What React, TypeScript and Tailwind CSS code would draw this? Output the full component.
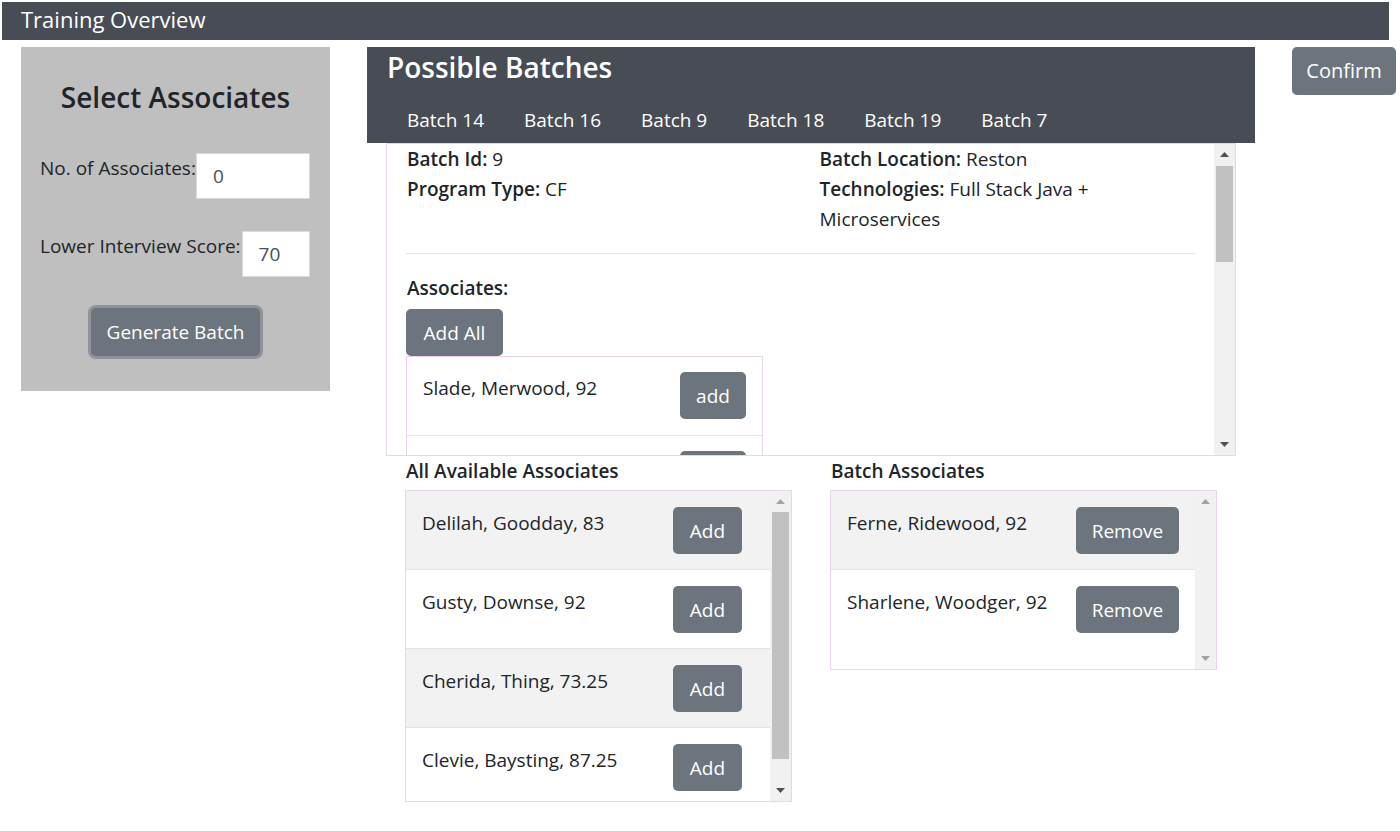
import React from 'react';

type Associate = { name: string };

const available: Associate[] = [
  { name: 'Delilah, Goodday, 83' },
  { name: 'Gusty, Downse, 92' },
  { name: 'Cherida, Thing, 73.25' },
  { name: 'Clevie, Baysting, 87.25' },
];

const batchAssociates: Associate[] = [
  { name: 'Ferne, Ridewood, 92' },
  { name: 'Sharlene, Woodger, 92' },
];

const tabs = ['Batch 14', 'Batch 16', 'Batch 9', 'Batch 18', 'Batch 19', 'Batch 7'];

const Arrow = ({ up, light }: { up?: boolean; light?: boolean }) => (
  <div className="h-[21px] w-full flex items-center justify-center">
    <svg width="9" height="5" viewBox="0 0 9 5">
      <polygon
        points={up ? '0,5 9,5 4.5,0' : '0,0 9,0 4.5,5'}
        fill={light ? '#a3a3a3' : '#505050'}
      />
    </svg>
  </div>
);

const ScrollBar = ({
  thumbTop,
  thumbHeight,
  upLight,
  downLight,
}: {
  thumbTop?: number;
  thumbHeight?: number;
  upLight?: boolean;
  downLight?: boolean;
}) => (
  <div className="w-[21px] shrink-0 h-full bg-[#f1f1f1] flex flex-col">
    <Arrow up light={upLight} />
    <div className="flex-1 px-[2px]">
      {thumbHeight !== undefined && (
        <div
          className="w-full bg-[#c1c1c1]"
          style={{ marginTop: thumbTop, height: thumbHeight }}
        />
      )}
    </div>
    <Arrow light={downLight} />
  </div>
);

const GrayButton = ({ label, className = '' }: { label: string; className?: string }) => (
  <button
    className={`bg-[#6c757d] text-white text-[19px] leading-[30px] rounded-[5px] h-[47px] ${className}`}
  >
    {label}
  </button>
);

const ListRow = ({
  name,
  action,
  shaded,
  last,
  padRight,
  buttonClass,
}: {
  name: string;
  action: string;
  shaded: boolean;
  last: boolean;
  padRight: string;
  buttonClass: string;
}) => (
  <div
    className={`h-[79px] shrink-0 flex items-start justify-between pl-[16px] pt-[16px] ${padRight} ${
      shaded ? 'bg-[#f2f2f2]' : 'bg-white'
    } ${last ? '' : 'border-b border-[#e3e3e3]'}`}
  >
    <span className="text-[19px] leading-[30px] text-[#212529] mt-[1px]">{name}</span>
    <GrayButton label={action} className={buttonClass} />
  </div>
);

const AssociateList = ({
  title,
  items,
  action,
  heightClass,
  padRight,
  buttonClass,
  bar,
}: {
  title: string;
  items: Associate[];
  action: string;
  heightClass: string;
  padRight: string;
  buttonClass: string;
  bar: React.ReactNode;
}) => (
  <div className="w-[387px] flex flex-col">
    <div className="text-[19px] leading-[30px] font-semibold text-[#212529] pl-[1px] mb-[4px]">
      {title}
    </div>
    <div className={`border border-[#ebd3ee] flex ${heightClass}`}>
      <div className="flex-1 flex flex-col overflow-hidden">
        {items.map((a, i) => (
          <ListRow
            key={a.name}
            name={a.name}
            action={action}
            shaded={i % 2 === 0}
            last={i === items.length - 1}
            padRight={padRight}
            buttonClass={buttonClass}
          />
        ))}
      </div>
      {bar}
    </div>
  </div>
);

const SelectPanel = () => (
  <div className="w-[309px] h-[344px] shrink-0 bg-[#bfbfbf] flex flex-col pl-[19px] pr-[20px]">
    <h4 className="mt-[32px] h-[36px] text-[28px] leading-[36px] font-semibold text-[#212529] text-center pl-[1px]">
      Select Associates
    </h4>
    <div className="mt-[38px] flex items-start">
      <label className="text-[19px] leading-[30px] text-[#212529] whitespace-nowrap">
        No. of Associates:
      </label>
      <div className="flex-1 h-[46px] bg-white border border-[#dadada] pl-[16px] text-[19px] leading-[44px] text-[#495057]">
        0
      </div>
    </div>
    <div className="mt-[32px] flex items-start">
      <label className="text-[19px] leading-[30px] text-[#212529] whitespace-nowrap pr-[1px]">
        Lower Interview Score:
      </label>
      <div className="flex-1 h-[46px] bg-white border border-[#dadada] pl-[16px] text-[19px] leading-[44px] text-[#495057]">
        70
      </div>
    </div>
    <div className="mt-[31px] flex justify-center pl-[1px]">
      <button className="h-[48px] px-[16px] bg-[#6c757d] text-white text-[19px] leading-[30px] rounded-[5px] ring-[3px] ring-[#8e9398]">
        Generate Batch
      </button>
    </div>
  </div>
);

const BatchDetails = () => (
  <div className="mx-[19px] h-[313px] border border-[#ebd3ee] flex">
    <div className="flex-1 overflow-hidden pl-[19px] pr-[19px] text-[19px] leading-[30px] text-[#212529]">
      <div className="grid grid-cols-2">
        <div className="pl-[1px]">
          <div>
            <b className="font-semibold">Batch Id:</b> 9
          </div>
          <div>
            <b className="font-semibold">Program Type:</b> CF
          </div>
        </div>
        <div className="pl-[19px]">
          <div>
            <b className="font-semibold">Batch Location:</b> Reston
          </div>
          <p>
            <b className="font-semibold">Technologies:</b> Full Stack Java + Microservices
          </p>
        </div>
      </div>
      <hr className="mt-[19px] border-t border-[#e4e4e4]" />
      <div className="mt-[19px] font-semibold pl-[1px]">Associates:</div>
      <GrayButton label="Add All" className="mt-[6px] w-[97px]" />
      <div className="w-[357px] border border-[#ebd3ee] border-b-0">
        <div className="h-[79px] border-b border-[#e3e3e3] flex items-start justify-between pl-[16px] pr-[16px] pt-[15px]">
          <span className="mt-[1px]">Slade, Merwood, 92</span>
          <GrayButton label="add" className="w-[66px]" />
        </div>
        <div className="h-[79px] flex items-start justify-end pr-[16px] pt-[15px]">
          <GrayButton label="add" className="w-[66px]" />
        </div>
      </div>
    </div>
    <ScrollBar thumbTop={1} thumbHeight={96} />
  </div>
);

export default function App() {
  return (
    <div
      className="w-full h-[832px] bg-white border-b border-[#d4d4d4] overflow-hidden"
      style={{ fontFamily: '"Open Sans", "Noto Sans", sans-serif' }}
    >
      <div className="mt-[2px] ml-[2px] mr-[11px] h-[38px] bg-[#484c55] pl-[19px] text-white text-[22px] leading-[34px]">
        Training Overview
      </div>
      <div className="mt-[7px] flex items-start">
        <div className="ml-[21px]">
          <SelectPanel />
        </div>
        <div className="ml-[37px] w-[888px] shrink-0 flex flex-col">
          <div className="h-[96px] bg-[#484c55] px-[20px] text-white">
            <h3 className="pt-[1px] h-[41px] text-[28px] leading-[38px] font-semibold">
              Possible Batches
            </h3>
            <nav className="pt-[17px] flex">
              {tabs.map((t) => (
                <span key={t} className="px-[20px] text-[19px] leading-[30px]">
                  {t}
                </span>
              ))}
            </nav>
          </div>
          <BatchDetails />
          <div className="ml-[38px] flex gap-[38px]">
            <AssociateList
              title="All Available Associates"
              items={available}
              action="Add"
              heightClass="h-[312px]"
              padRight="pr-[28px]"
              buttonClass="w-[69px]"
              bar={<ScrollBar upLight thumbTop={0} thumbHeight={247} />}
            />
            <AssociateList
              title="Batch Associates"
              items={batchAssociates}
              action="Remove"
              heightClass="h-[180px]"
              padRight="pr-[16px]"
              buttonClass="w-[103px]"
              bar={<ScrollBar upLight downLight />}
            />
          </div>
        </div>
        <div className="ml-[37px]">
          <GrayButton label="Confirm" className="w-[104px] h-[48px] text-[20px]" />
        </div>
      </div>
    </div>
  );
}
